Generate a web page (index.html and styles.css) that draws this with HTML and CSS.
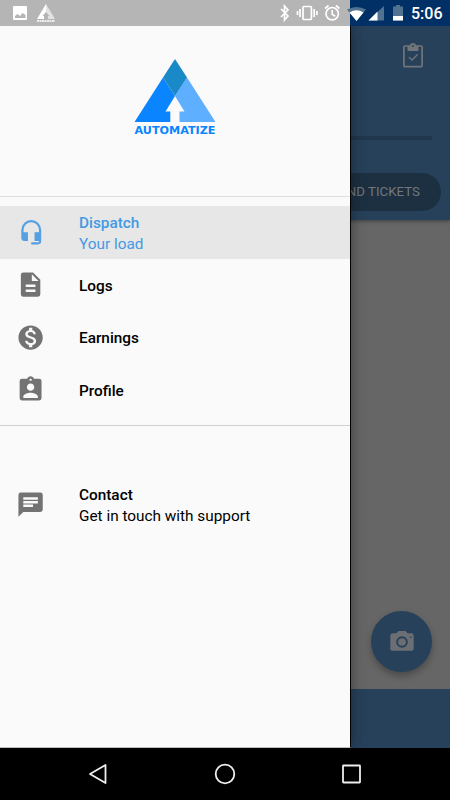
FILE: index.html
```html
<!DOCTYPE html>
<html lang="en">
<head>
<meta charset="utf-8">
<title>Automatize</title>
<link rel="stylesheet" href="styles.css">
</head>
<body>
<div class="phone">
  <header class="status">
    <div class="status-left">
      <svg width="48" height="24" viewBox="0 0 48 24"><path fill="#fff" fill-rule="evenodd" d="M2 4h12q1 0 1 1v12q0 1-1 1H2q-1 0-1-1V5q0-1 1-1zm1 12h10.500V13L10.500 11 8 14l-2.500-2L3 14z"/><path fill="#fff" d="M34 2 25 17h7v-3h-1.500l3.500-4z"/><path fill="#e2e2e2" d="m34 2 9 15h-7v-3h1.500L34 10z"/><path stroke="#eee" stroke-width="2" stroke-dasharray="2 .5" d="M25 19h18"/></svg>
    </div>
    <div class="status-mid">
      <svg width="72" height="24" viewBox="0 0 72 24" fill="none" stroke="#fff" stroke-width="1.700"><path d="m2 8 7 7-3.500 4V5L9 9l-7 7"/><rect x="24" y="5.500" width="8.400" height="13" rx="1"/><path d="M21 8v8M18.500 10v4M35.200 8v8M37.900 10v4"/><circle cx="53.200" cy="12.700" r="6.200"/><path d="M53.200 9v4.300l3 2M46 7.500l3.500-3M56.900 4.500l3.500 3"/></svg>
    </div>
    <div class="status-right">
      <svg width="56" height="24" viewBox="0 0 56 24"><path fill="#527291" d="M-1 7.500q9.500-5 19 0L8.500 19zM20.500 18.500 36 4v14.500zM45 4.500h3V3h4v1.500h3v14H45z"/><path fill="#fff" d="M1.500 10.500q7-4.500 14 0l-7 8.500zM20.500 18.500l9-9v9zM45 14h10v4.500H45z"/></svg>
      <span class="clock">5:06</span>
    </div>
  </header>

  <div class="screen">
    <main class="page">
      <section class="load">
        <svg class="clipboard" width="20" height="25" viewBox="0 0 20 25" fill="none" stroke="#71757a" stroke-width="1.700"><rect x=".900" y="3" width="18.200" height="20.600" rx="1"/><path fill="#71757a" stroke="none" d="M4.500 3H7a3 3 0 0 1 6 0h2.500v5h-11z"/><circle cx="10" cy="3" r="1" fill="#27415b" stroke="none"/><path stroke-width="1.400" d="m6 14.300 3 2.800 5.500-5.600"/></svg>
        <div class="track"></div>
        <div class="tickets">SEND TICKETS</div>
      </section>
      <section class="body">
        <div class="fab"><svg width="28" height="28" viewBox="0 0 24 24" fill="#6b6f74"><path fill-rule="evenodd" d="M9 2.500 7.200 4.500H4a2 2 0 0 0-2 2V18c0 .8.700 1.500 1.500 1.500h17c.8 0 1.500-.7 1.500-1.500V6.500a2 2 0 0 0-2-2h-3.200L15 2.500zm3 14.500a5 5 0 1 1 0-10 5 5 0 0 1 0 10zm7.500-8.300a.7.700 0 1 1 0-1.400.7.700 0 0 1 0 1.400z"/><circle cx="12" cy="12" r="3.300"/></svg></div>
      </section>
      <div class="bottom"></div>
    </main>

    <aside class="drawer">
      <div class="brand">
        <svg width="84" height="84" viewBox="0 0 84 84"><path fill="#0a84ff" d="M29 18.500.5 63H36.300V52.500H31.500L41 37z"/><path fill="#5eafff" d="m53 18.500 28.500 44.500H45.500V52.500H50.500L41 37z"/><path fill="#1a89c8" d="m41 0 12 18.500L41 37 29 18.500z"/><text class="brand-name" x="0.500" y="74.500" textLength="81" lengthAdjust="spacingAndGlyphs">AUTOMATIZE</text></svg>
      </div>
      <nav class="menu">
        <a class="item active">
          <svg class="headset" viewBox="0 0 24 24"><path d="M12 1a9 9 0 0 0-9 9v7a3 3 0 0 0 3 3h3v-8H5v-2a7 7 0 0 1 14 0v2h-4v8h4v1h-7v2h6a3 3 0 0 0 3-3V10a9 9 0 0 0-9-9z"/></svg>
          <span class="label"><b>Dispatch</b><span>Your load</span></span>
        </a>
        <a class="item">
          <svg viewBox="0 0 24 24"><path d="M14 2H6a2 2 0 0 0-2 2v16c0 1.100.9 2 2 2h12a2 2 0 0 0 2-2V8zm2 16H8v-2h8zm0-4H8v-2h8zm-3-5V3.500L18.500 9z"/></svg>
          <span class="label"><b>Logs</b></span>
        </a>
        <a class="item">
          <svg viewBox="0 0 24 24"><path d="M12 2C6.480 2 2 6.480 2 12s4.480 10 10 10 10-4.480 10-10S17.520 2 12 2zm1.410 16.090V20h-2.670v-1.930c-1.710-.36-3.160-1.460-3.270-3.400h1.960c.1 1.050.82 1.870 2.650 1.870 1.960 0 2.400-.98 2.400-1.590 0-.83-.44-1.610-2.670-2.140-2.480-.6-4.180-1.620-4.180-3.670 0-1.720 1.390-2.840 3.110-3.210V4h2.670v1.950c1.860.45 2.790 1.860 2.850 3.390H14.300c-.05-1.110-.64-1.870-2.220-1.870-1.500 0-2.400.68-2.400 1.640 0 .84.65 1.390 2.670 1.910s4.180 1.390 4.180 3.910c-.01 1.830-1.380 2.830-3.120 3.160z"/></svg>
          <span class="label"><b>Earnings</b></span>
        </a>
        <a class="item">
          <svg viewBox="0 0 24 24"><path d="M19 3h-4.180C14.400 1.840 13.300 1 12 1s-2.400.84-2.820 2H5a2 2 0 0 0-2 2v14c0 1.100.9 2 2 2h14a2 2 0 0 0 2-2V5a2 2 0 0 0-2-2zm-7 0c.55 0 1 .45 1 1s-.45 1-1 1-1-.45-1-1 .45-1 1-1zm0 4c1.660 0 3 1.340 3 3s-1.340 3-3 3-3-1.340-3-3 1.340-3 3-3zm6 12H6v-1.400c0-2 4-3.100 6-3.100s6 1.100 6 3.100z"/></svg>
          <span class="label"><b>Profile</b></span>
        </a>
      </nav>
      <div class="menu support">
        <a class="item">
          <svg viewBox="0 0 24 24"><path d="M20 2H4a2 2 0 0 0-1.990 2L2 22l4-4h14a2 2 0 0 0 2-2V4a2 2 0 0 0-2-2zM6 9h12v2H6zm8 5H6v-2h8zm4-6H6V6h12z"/></svg>
          <span class="label"><b>Contact</b><span>Get in touch with support</span></span>
        </a>
      </div>
    </aside>
  </div>

  <footer class="navbar">
    <svg width="22" height="24" viewBox="0 0 22 24"><path d="M18.500 3v18L3 12z"/></svg>
    <svg width="22" height="24" viewBox="0 0 22 24"><circle cx="11" cy="12" r="9.300"/></svg>
    <svg width="22" height="24" viewBox="0 0 22 24"><rect x="3" y="3.500" width="17" height="17" rx=".5"/></svg>
  </footer>
</div>
</body>
</html>
```
FILE: styles.css
```css
* { box-sizing: border-box; }
body { margin: 0; font-family: Roboto, "Liberation Sans", sans-serif; }
svg { display: block; flex: none; overflow: visible; }

.phone {
  width: 450px;
  height: 800px;
  display: flex;
  flex-direction: column;
  overflow: hidden;
  background: #000;
}

.status {
  height: 26px;
  flex: none;
  display: flex;
  background: linear-gradient(to right, #b5b5b5 350px, #003066 350px);
}
.status-left { width: 278px; padding: 2px 0 0 12px; }
.status-mid { width: 70px; padding: 1px 0 0 1px; }
.status-right { display: flex; padding-top: 2px; }
.clock {
  margin-left: 7px;
  color: #fff;
  font-size: 16px;
  font-weight: 500;
  line-height: 24px;
  white-space: nowrap;
}

.screen { position: relative; height: 722px; flex: none; overflow: hidden; }

.page { height: 100%; display: flex; flex-direction: column; background: #666; }
.load {
  height: 194px;
  display: flex;
  flex-direction: column;
  align-items: flex-end;
  background: #27415b;
  box-shadow: 0 1px 4px rgba(0, 0, 0, .4);
}
.clipboard { margin: 17px 27px 0 0; }
.track { width: 300px; height: 4px; margin: 68px 18px 0 0; background: #21374d; }
.tickets {
  width: 150px;
  height: 38px;
  margin: 33px 9px 0 0;
  padding-right: 21px;
  border-radius: 19px;
  background: #1d3041;
  color: #72777c;
  font-size: 13.300px;
  line-height: 38px;
  text-align: right;
}
.body { flex: 1; display: flex; justify-content: flex-end; align-items: flex-end; padding: 0 18px 17px 0; }
.fab {
  width: 61px;
  height: 61px;
  display: flex;
  align-items: center;
  justify-content: center;
  border-radius: 50%;
  background: #27415b;
  box-shadow: 0 4px 7px rgba(0, 0, 0, .28);
}
.bottom { height: 59px; background: #27415b; }

.drawer {
  position: absolute;
  top: 0;
  left: 0;
  width: 351px;
  height: 722px;
  border-right: 1px solid #000;
  border-bottom: 1px solid #bbb;
  background: #fafafa;
  box-shadow: 0 0 14px rgba(0, 0, 0, .4);
}
.brand {
  height: 171px;
  padding: 33px 0 0 134px;
  border-bottom: 1px solid #dedede;
}
.brand-name { font: bold 11px "DejaVu Sans", sans-serif; fill: #0a84ff; }

.menu { height: 229px; padding-top: 9px; border-bottom: 1px solid #d0d0d0; }
.item {
  height: 52.5px;
  display: flex;
  align-items: center;
  padding-left: 16px;
  color: #000;
}
.item svg { width: 29.200px; height: 29.200px; margin-right: 33.800px; fill: #737373; }
.item svg.headset { width: 26.500px; height: 26.500px; margin: 0 35px 0 1.500px; fill: #559fe2; }
.item.active { background: #e7e7e7; color: #4499e3; }
.label { display: flex; flex-direction: column; padding-top: 3px; font-size: 15.350px; line-height: 21px; }
.label b { font-weight: 500; }
.support { border: 0; padding-top: 52.500px; }

.navbar {
  flex: 1;
  display: flex;
  align-items: center;
  justify-content: space-between;
  padding: 0 88px 0 87px;
}
.navbar svg { fill: none; stroke: #eee; stroke-width: 1.800; stroke-linejoin: round; }
```
